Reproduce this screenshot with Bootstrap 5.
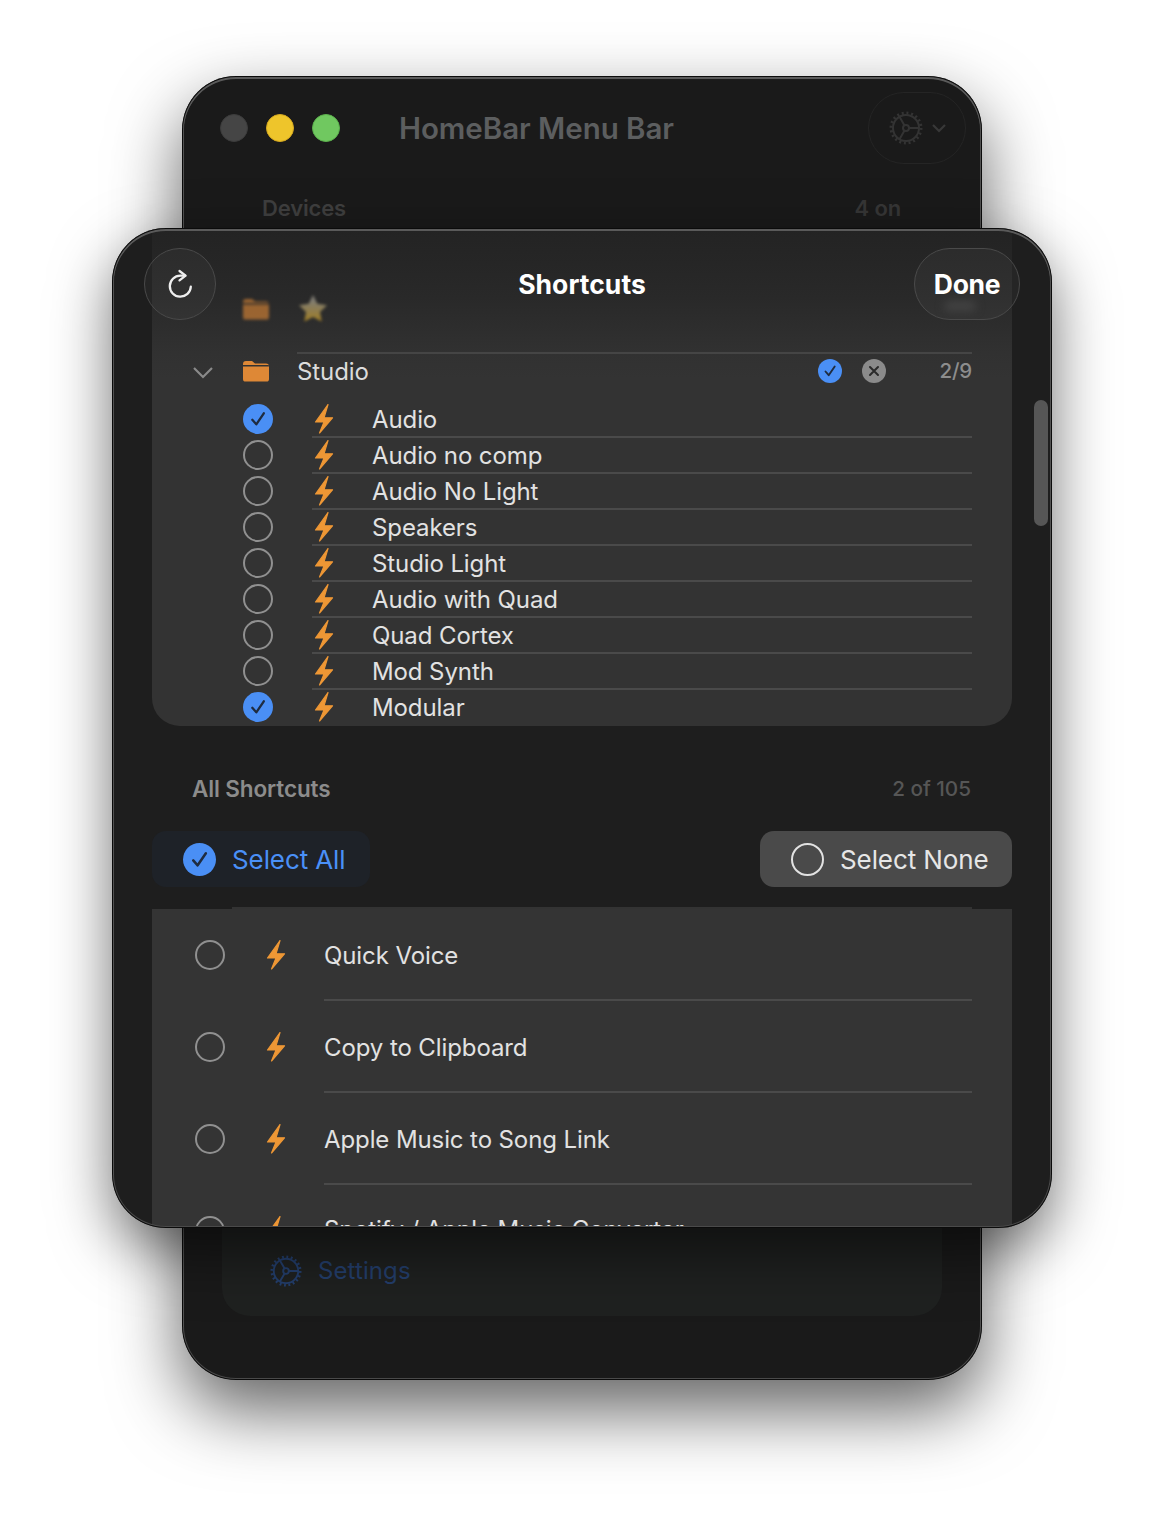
<!DOCTYPE html>
<html lang="en"><head><meta charset="utf-8"><title>Shortcuts</title>
<link href="https://cdn.jsdelivr.net/npm/bootstrap@5.3.0/dist/css/bootstrap.min.css" rel="stylesheet">
<style>
html,body{background:#fff;margin:0}
body{font-family:Inter,"Liberation Sans",sans-serif;color:#e4e4e4}
.stage{width:1164px;height:1528px;overflow:hidden}
.win{border-radius:54px;overflow:hidden;height:100%}
.win::after{content:"";position:absolute;inset:0;border-radius:inherit;box-shadow:inset 0 0 0 1px #0b0b0b,inset 0 1.5px 0 1.5px #5a5a5a,inset 0 0 0 2px #4a4a4a;pointer-events:none;z-index:9}
.shadow-wrap{border-radius:54px}
.back-shadow{left:182px;top:76px;width:800px;height:1304px;box-shadow:0 30px 70px rgba(0,0,0,.62);z-index:1}
.front-shadow{left:112px;top:228px;width:940px;height:1000px;box-shadow:0 22px 60px rgba(0,0,0,.55);z-index:2}
.back{background:#1a1a1a}
.lights{margin-left:38px;gap:18px}
.light{width:28px;height:28px;border-radius:50%}
.l1{background:#454545;border:1px solid #3c3c3c}.l2{background:#eec52b;border:1px solid #d6a91f}.l3{background:#70c860;border:1px solid #5bb04c}
.wtitle{font-size:29.5px;font-weight:600;color:#5c5e5f;margin-left:59px;letter-spacing:-.05px}
.pill-gear{width:98px;height:72px;border-radius:36px;border:1.5px solid #252525;margin-left:auto;margin-right:16px;padding-left:20px;gap:8px;color:#333}
.back-head{padding-top:16px}
.back-sec{padding:29px 81px 0 80px;font-size:22px;font-weight:600;color:#3f3f3f;letter-spacing:-.15px;line-height:30px}
.back-sec span+span{color:#363636}
.set-panel{margin:auto 40px 64px;height:200px;border-radius:0 0 28px 28px;background:#1f2120;padding:0 0 29px 48px;gap:16px;font-size:24px;color:#243f6d;letter-spacing:.1px}
.set-panel span{line-height:32px}
.set-gear{color:#243f6d}
.front{background:#1e1e1e}
.panel{margin:0 40px;height:498px;background:linear-gradient(#232323 0,#292929 70px,#313131 125px,#333 150px);border-radius:0 0 28px 28px;overflow:hidden;flex:none}
.blurrow{height:124px;padding:70px 0 0 90px;gap:28px;filter:blur(1.6px);opacity:.62}
.star-ic{margin-top:-4px}
.studio{height:49px;padding-right:40px}
.chev-box{width:90px;padding-left:40px;padding-top:14px}
.fold-ic{flex:none;margin-top:8px}
.studio-body{border-top:2px solid #454545;height:49px;margin-left:27px;font-size:24px;color:#dcdcdc;padding-bottom:14px;letter-spacing:-.1px}
.studio-name{padding-top:2px}
.x-ic{margin-left:20px;flex:none}
.count{font-size:20.500px;color:#8d8d8d;width:50px;text-align:right;margin-left:36px;letter-spacing:-.2px;font-weight:500;padding-top:1px}
.srow{height:36px;padding:0 40px 0 91px}
.rline{height:37px;align-self:flex-start;border-bottom:2px solid #4a4a4a;margin-left:39px;font-size:24px;color:#e2e2e2;letter-spacing:-.1px;padding-top:2px}
.srow:last-child .rline{border-bottom:0;height:36px;padding-top:1px}
.ttl{width:60px;flex:none;padding-left:2px;margin-top:-2px}
.ring{width:30px;height:30px;border-radius:50%;border:2.5px solid #909090;flex:none}
.tick{border-radius:50%;background:#4a8ff5;flex:none}
.ahead{padding:48px 41px 0 40px;margin:0 40px;height:105px;font-size:22.5px;font-weight:600;color:#8c8c8c;line-height:30px;letter-spacing:-.12px;flex:none}
.ahead span+span{color:#565656;font-weight:500;letter-spacing:0;font-size:20.700px}
.acts{margin:0 40px;flex:none}
.act{height:56px;border-radius:14px;border:0;font-size:26px;padding:0;gap:16px;letter-spacing:-.1px}
.act-all,.act-all:hover{width:218px;background:#1e2228;color:#4a90f7;padding-left:31px;justify-content:flex-start}
.act-none,.act-none:hover{width:252px;background:#4a4a4a;color:#e6e6e6;padding-left:31px;justify-content:flex-start}
.ring-w{width:33px;height:33px;border-radius:50%;border:2.5px solid #e2e2e2;flex:none}
.strip{height:2px;background:#333;margin:20px 80px 0 120px;flex:none}
.list{margin:0 40px;background:#343434;flex:1;overflow:hidden;padding-left:43px}
.lrow{height:92px}
.lline{height:92px;border-bottom:2px solid #4a4a4a;margin-right:40px;font-size:24px;color:#e2e2e2;letter-spacing:-.1px;padding-top:3px}
.lrow:last-child .lline{padding-top:0}
.lttl{width:99px;flex:none;padding-left:41px}
.glass{height:72px;border-radius:36px;border:1.5px solid #4a4a4a;background:rgba(255,255,255,.035);top:20px;z-index:5;padding:0}
.g-ref{left:32px;width:72px}
.g-done{left:802px;width:106px;color:#fff;font-size:26.5px;font-weight:700;letter-spacing:-.35px;padding-top:1px}
.g-done:hover{color:#fff}
.ftitle{top:20px;left:0;right:0;height:72px;font-size:26.5px;font-weight:700;color:#fff;z-index:4;letter-spacing:.05px;padding-top:1px}
.smudge{left:832px;top:73px;width:32px;height:10px;border-radius:5px;background:#3c3c3c;filter:blur(4px);z-index:2}
.bar{right:4px;top:172px;width:14px;height:126px;border-radius:7px;background:#565656;z-index:6}
</style></head><body>
<svg width="0" height="0" class="position-absolute"><defs>
<symbol id="bolt" viewBox="0 0 20 32"><path d="M14 1.5 1.5 19H10L5.500 30 18.500 14.800H10Z" fill="#ee9735" stroke="#ee9735" stroke-width="1.200" stroke-linejoin="round"/></symbol>
<symbol id="folder" viewBox="0 0 28 22"><path d="M1 4a3 3 0 0 1 3-3h6l3 2.500h11a3 3 0 0 1 3 3V5H1Z" fill="#de8836"/><path d="M1 6.400h26V19a2.600 2.600 0 0 1-2.600 2.600H3.600A2.600 2.600 0 0 1 1 19Z" fill="#de8836"/></symbol>
<symbol id="gear" viewBox="0 0 34 34"><circle cx="17" cy="17" r="13" fill="none" stroke="currentColor" stroke-width="2"/><circle cx="17" cy="17" r="15" fill="none" stroke="currentColor" stroke-width="3" stroke-dasharray="2 2.710"/><circle cx="17" cy="17" r="3" fill="none" stroke="currentColor" stroke-width="2"/><path d="M20 17H30M15.500 14.400 10.500 5.800M15.500 19.600 10.500 28.200" stroke="currentColor" stroke-width="2" fill="none"/></symbol>
<symbol id="chk" viewBox="0 0 30 30"><path d="M9.300 15.800 13.300 20.300 20.800 9.300" fill="none" stroke="#1f2c40" stroke-width="2.300" stroke-linecap="round" stroke-linejoin="round"/></symbol>
</defs></svg>
<div class="stage position-relative">

<div class="shadow-wrap position-absolute back-shadow"><div class="win back position-relative d-flex flex-column">
  <div class="back-head d-flex align-items-center">
    <div class="d-flex lights">
      <div class="light l1"></div><div class="light l2"></div><div class="light l3"></div>
    </div>
    <div class="wtitle">HomeBar Menu Bar</div>
    <div class="pill-gear d-flex align-items-center">
      <svg width="34" height="34"><use href="#gear"/></svg>
      <svg width="16" height="10" viewBox="0 0 16 10"><path d="M2 2l6 6 6-6" fill="none" stroke="#383838" stroke-width="2.200"/></svg>
    </div>
  </div>
  <div class="back-sec d-flex justify-content-between"><span>Devices</span><span>4 on</span></div>
  <div class="set-panel d-flex align-items-end">
    <svg width="32" height="32" class="set-gear"><use href="#gear"/></svg><span>Settings</span>
  </div>
</div></div>

<div class="shadow-wrap position-absolute front-shadow"><div class="win front position-relative d-flex flex-column">
  <button class="btn glass g-ref position-absolute d-flex align-items-center justify-content-center" aria-label="Refresh">
    <svg width="28" height="32" viewBox="0 0 28 32"><path d="M19 7.700H14.300A10.500 10.500 0 1 0 24.800 18.700" fill="none" stroke="#eee" stroke-width="2.300" stroke-linecap="round"/><path d="M13.500 3 19.600 7.700 13.500 12.300" fill="none" stroke="#eee" stroke-width="2.300" stroke-linecap="round" stroke-linejoin="round"/></svg>
  </button>
  <div class="ftitle position-absolute d-flex align-items-center justify-content-center">Shortcuts</div>
  <button class="btn glass g-done position-absolute">Done</button>
  <div class="smudge position-absolute"></div>
  <div class="bar position-absolute"></div>

  <div class="panel">
    <div class="blurrow d-flex align-items-start">
      <svg width="28" height="22"><use href="#folder"/></svg>
      <svg width="30" height="28" viewBox="0 0 30 28" class="star-ic"><defs><linearGradient id="sg" x1="0" y1="0" x2="0" y2="1"><stop offset=".2" stop-color="#b5b0a0"/><stop offset="1" stop-color="#e8b020"/></linearGradient></defs><path d="M15 1l4.300 8.800 9.700 1.400-7 6.800 1.700 9.600L15 23.100l-8.700 4.500L8 18l-7-6.800 9.700-1.400Z" fill="url(#sg)"/></svg>
    </div>
    <div class="studio d-flex align-items-start">
      <div class="chev-box d-flex"><svg width="22" height="13" viewBox="0 0 22 13"><path d="M2 2l9 9 9-9" fill="none" stroke="#8a8a8a" stroke-width="2.200"/></svg></div>
      <svg width="28" height="22" class="fold-ic"><use href="#folder"/></svg>
      <div class="studio-body flex-fill d-flex align-items-center">
        <span class="flex-fill studio-name">Studio</span>
        <svg width="24" height="24" viewBox="0 0 24 24" class="tick"><path d="M7.500 12.500 10.700 16.200 16.700 7.500" fill="none" stroke="#1f2c40" stroke-width="1.900" stroke-linecap="round" stroke-linejoin="round"/></svg>
        <svg width="24" height="24" viewBox="0 0 24 24" class="x-ic"><circle cx="12" cy="12" r="12" fill="#8b8b8b"/><path d="M8 8l8 8M16 8l-8 8" stroke="#2a2a2a" stroke-width="2" stroke-linecap="round"/></svg>
        <span class="count">2/9</span>
      </div>
    </div>
    <div class="srow d-flex align-items-center"><svg width="30" height="30" class="tick"><use href="#chk"/></svg><div class="rline flex-fill d-flex align-items-center"><span class="ttl"><svg width="20" height="32" class="d-block"><use href="#bolt"/></svg></span>Audio</div></div>
    <div class="srow d-flex align-items-center"><div class="ring"></div><div class="rline flex-fill d-flex align-items-center"><span class="ttl"><svg width="20" height="32" class="d-block"><use href="#bolt"/></svg></span>Audio no comp</div></div>
    <div class="srow d-flex align-items-center"><div class="ring"></div><div class="rline flex-fill d-flex align-items-center"><span class="ttl"><svg width="20" height="32" class="d-block"><use href="#bolt"/></svg></span>Audio No Light</div></div>
    <div class="srow d-flex align-items-center"><div class="ring"></div><div class="rline flex-fill d-flex align-items-center"><span class="ttl"><svg width="20" height="32" class="d-block"><use href="#bolt"/></svg></span>Speakers</div></div>
    <div class="srow d-flex align-items-center"><div class="ring"></div><div class="rline flex-fill d-flex align-items-center"><span class="ttl"><svg width="20" height="32" class="d-block"><use href="#bolt"/></svg></span>Studio Light</div></div>
    <div class="srow d-flex align-items-center"><div class="ring"></div><div class="rline flex-fill d-flex align-items-center"><span class="ttl"><svg width="20" height="32" class="d-block"><use href="#bolt"/></svg></span>Audio with Quad</div></div>
    <div class="srow d-flex align-items-center"><div class="ring"></div><div class="rline flex-fill d-flex align-items-center"><span class="ttl"><svg width="20" height="32" class="d-block"><use href="#bolt"/></svg></span>Quad Cortex</div></div>
    <div class="srow d-flex align-items-center"><div class="ring"></div><div class="rline flex-fill d-flex align-items-center"><span class="ttl"><svg width="20" height="32" class="d-block"><use href="#bolt"/></svg></span>Mod Synth</div></div>
    <div class="srow d-flex align-items-center"><svg width="30" height="30" class="tick"><use href="#chk"/></svg><div class="rline flex-fill d-flex align-items-center"><span class="ttl"><svg width="20" height="32" class="d-block"><use href="#bolt"/></svg></span>Modular</div></div>
  </div>

  <div class="ahead d-flex justify-content-between"><span>All Shortcuts</span><span>2 of 105</span></div>
  <div class="acts d-flex justify-content-between">
    <button class="btn act act-all d-flex align-items-center"><svg width="33" height="33" viewBox="0 0 30 30" class="tick"><use href="#chk"/></svg>Select All</button>
    <button class="btn act act-none d-flex align-items-center"><span class="ring-w"></span>Select None</button>
  </div>
  <div class="strip"></div>
  <div class="list">
    <div class="lrow d-flex align-items-center"><div class="ring"></div><span class="lttl"><svg width="20" height="32" class="d-block"><use href="#bolt"/></svg></span><div class="lline flex-fill d-flex align-items-center">Quick Voice</div></div>
    <div class="lrow d-flex align-items-center"><div class="ring"></div><span class="lttl"><svg width="20" height="32" class="d-block"><use href="#bolt"/></svg></span><div class="lline flex-fill d-flex align-items-center">Copy to Clipboard</div></div>
    <div class="lrow d-flex align-items-center"><div class="ring"></div><span class="lttl"><svg width="20" height="32" class="d-block"><use href="#bolt"/></svg></span><div class="lline flex-fill d-flex align-items-center">Apple Music to Song Link</div></div>
    <div class="lrow d-flex align-items-center"><div class="ring"></div><span class="lttl"><svg width="20" height="32" class="d-block"><use href="#bolt"/></svg></span><div class="lline flex-fill d-flex align-items-center">Spotify / Apple Music Converter</div></div>
  </div>
</div></div>

</div>
<script src="https://cdn.jsdelivr.net/npm/bootstrap@5.3.0/dist/js/bootstrap.bundle.min.js"></script>
</body></html>
